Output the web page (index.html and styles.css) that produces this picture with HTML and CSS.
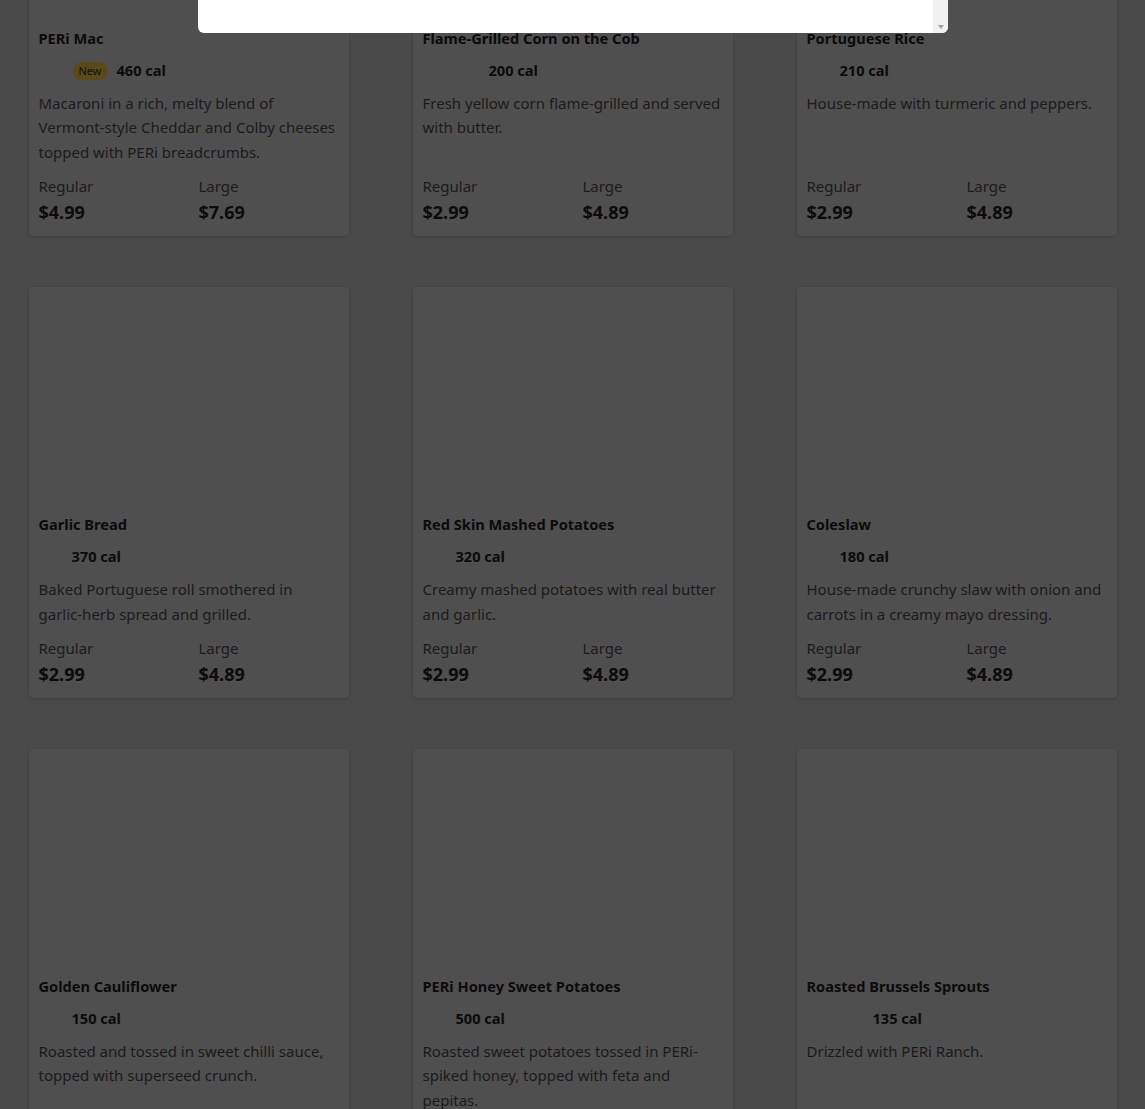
FILE: index.html
```html
<!DOCTYPE html>
<html lang="en">
<head>
<meta charset="utf-8">
<title>Sides</title>
<link rel="stylesheet" href="styles.css">
</head>
<body>
<main class="menu">
  <section class="grid">
    <article class="card">
      <div class="photo"></div>
      <div class="body">
        <h3 class="name">PERi Mac</h3>
        <div class="meta"><span class="icon"></span><span class="badge">New</span><span class="cal">460 cal</span></div>
        <p class="desc">Macaroni in a rich, melty blend of Vermont-style Cheddar and Colby cheeses topped with PERi breadcrumbs.</p>
        <div class="prices">
          <div><div class="size">Regular</div><div class="price">$4.99</div></div>
          <div><div class="size">Large</div><div class="price">$7.69</div></div>
        </div>
      </div>
    </article>
    <article class="card">
      <div class="photo"></div>
      <div class="body">
        <h3 class="name">Flame-Grilled Corn on the Cob</h3>
        <div class="meta"><span class="icon"></span><span class="icon"></span><span class="cal">200 cal</span></div>
        <p class="desc">Fresh yellow corn flame-grilled and served with butter.</p>
        <div class="prices">
          <div><div class="size">Regular</div><div class="price">$2.99</div></div>
          <div><div class="size">Large</div><div class="price">$4.89</div></div>
        </div>
      </div>
    </article>
    <article class="card">
      <div class="photo"></div>
      <div class="body">
        <h3 class="name">Portuguese Rice</h3>
        <div class="meta"><span class="icon"></span><span class="cal">210 cal</span></div>
        <p class="desc">House-made with turmeric and peppers.</p>
        <div class="prices">
          <div><div class="size">Regular</div><div class="price">$2.99</div></div>
          <div><div class="size">Large</div><div class="price">$4.89</div></div>
        </div>
      </div>
    </article>

    <article class="card">
      <div class="photo"></div>
      <div class="body">
        <h3 class="name">Garlic Bread</h3>
        <div class="meta"><span class="icon"></span><span class="cal">370 cal</span></div>
        <p class="desc">Baked Portuguese roll smothered in garlic-herb spread and grilled.</p>
        <div class="prices">
          <div><div class="size">Regular</div><div class="price">$2.99</div></div>
          <div><div class="size">Large</div><div class="price">$4.89</div></div>
        </div>
      </div>
    </article>
    <article class="card">
      <div class="photo"></div>
      <div class="body">
        <h3 class="name">Red Skin Mashed Potatoes</h3>
        <div class="meta"><span class="icon"></span><span class="cal">320 cal</span></div>
        <p class="desc">Creamy mashed potatoes with real butter and garlic.</p>
        <div class="prices">
          <div><div class="size">Regular</div><div class="price">$2.99</div></div>
          <div><div class="size">Large</div><div class="price">$4.89</div></div>
        </div>
      </div>
    </article>
    <article class="card">
      <div class="photo"></div>
      <div class="body">
        <h3 class="name">Coleslaw</h3>
        <div class="meta"><span class="icon"></span><span class="cal">180 cal</span></div>
        <p class="desc">House-made crunchy slaw with onion and carrots in a creamy mayo dressing.</p>
        <div class="prices">
          <div><div class="size">Regular</div><div class="price">$2.99</div></div>
          <div><div class="size">Large</div><div class="price">$4.89</div></div>
        </div>
      </div>
    </article>

    <article class="card">
      <div class="photo"></div>
      <div class="body">
        <h3 class="name">Golden Cauliflower</h3>
        <div class="meta"><span class="icon"></span><span class="cal">150 cal</span></div>
        <p class="desc">Roasted and tossed in sweet chilli sauce, topped with superseed crunch.</p>
        <div class="prices">
          <div><div class="size">Regular</div><div class="price">$2.99</div></div>
          <div><div class="size">Large</div><div class="price">$4.89</div></div>
        </div>
      </div>
    </article>
    <article class="card">
      <div class="photo"></div>
      <div class="body">
        <h3 class="name">PERi Honey Sweet Potatoes</h3>
        <div class="meta"><span class="icon"></span><span class="cal">500 cal</span></div>
        <p class="desc">Roasted sweet potatoes tossed in PERi-spiked honey, topped with feta and pepitas.</p>
        <div class="prices">
          <div><div class="size">Regular</div><div class="price">$3.49</div></div>
          <div><div class="size">Large</div><div class="price">$5.49</div></div>
        </div>
      </div>
    </article>
    <article class="card">
      <div class="photo"></div>
      <div class="body">
        <h3 class="name">Roasted Brussels Sprouts</h3>
        <div class="meta"><span class="icon"></span><span class="icon"></span><span class="cal">135 cal</span></div>
        <p class="desc">Drizzled with PERi Ranch.</p>
        <div class="prices">
          <div><div class="size">Regular</div><div class="price">$3.49</div></div>
          <div><div class="size">Large</div><div class="price">$5.49</div></div>
        </div>
      </div>
    </article>
  </section>
</main>

<div class="modal" role="dialog">
  <div class="modal-content"></div>
  <div class="modal-scroll"><span class="arrow"></span></div>
</div>
</body>
</html>
```

FILE: styles.css
```css
* { box-sizing: border-box; }

html, body {
  margin: 0;
  padding: 0;
  background: #4a4a4a;
  font-family: "Noto Sans", "Open Sans", sans-serif;
  overflow: hidden;
}

.menu {
  margin-top: -199px;
}

.grid {
  display: grid;
  grid-template-columns: repeat(3, 320px);
  column-gap: 64px;
  row-gap: 51px;
  justify-content: center;
}

.card {
  background: #4f4f4f;
  border-radius: 4px;
  box-shadow: 0 1px 3px rgba(0, 0, 0, 0.14), 0 0 1px rgba(0, 0, 0, 0.1);
  display: flex;
  flex-direction: column;
  overflow: hidden;
}

.photo {
  height: 217px;
  flex: none;
}

.body {
  flex: 1;
  display: flex;
  flex-direction: column;
  padding: 10px 10px 10px;
}

.name {
  margin: 0;
  font-size: 14.6px;
  line-height: 20px;
  font-weight: 700;
  color: #0b0b0b;
}

.meta {
  margin-top: 10px;
  height: 24px;
  display: flex;
  align-items: center;
  gap: 9px;
}

.icon {
  width: 24px;
  height: 24px;
  flex: none;
}

.badge {
  width: 35px;
  height: 18px;
  border-radius: 9px;
  background: #5b4a17;
  color: #120f06;
  font-size: 11px;
  line-height: 18px;
  text-align: center;
  margin: 2px 0 0 1px;
}

.cal {
  font-size: 14.6px;
  font-weight: 700;
  color: #0b0b0b;
}

.desc {
  margin: 9px 0 0;
  font-size: 15px;
  line-height: 24.4px;
  color: #1b1b1b;
}

.prices {
  margin-top: auto;
  padding-top: 10px;
  display: grid;
  grid-template-columns: 160px 1fr;
}

.size {
  font-size: 15px;
  line-height: 24px;
  color: #1b1b1b;
}

.price {
  font-size: 18px;
  line-height: 28px;
  font-weight: 700;
  color: #0b0b0b;
}

.modal {
  position: fixed;
  top: 0;
  left: 198px;
  width: 750px;
  height: 33px;
  background: #ffffff;
  border-radius: 0 0 6px 6px;
  display: flex;
  overflow: hidden;
}

.modal-content {
  flex: 1;
}

.modal-scroll {
  width: 15px;
  background: #f1f1f1;
  display: flex;
  align-items: flex-end;
  justify-content: center;
  padding-bottom: 4px;
}

.arrow {
  width: 0;
  height: 0;
  border-left: 3.5px solid transparent;
  border-right: 3.5px solid transparent;
  border-top: 4px solid #a3a3a3;
}
```
